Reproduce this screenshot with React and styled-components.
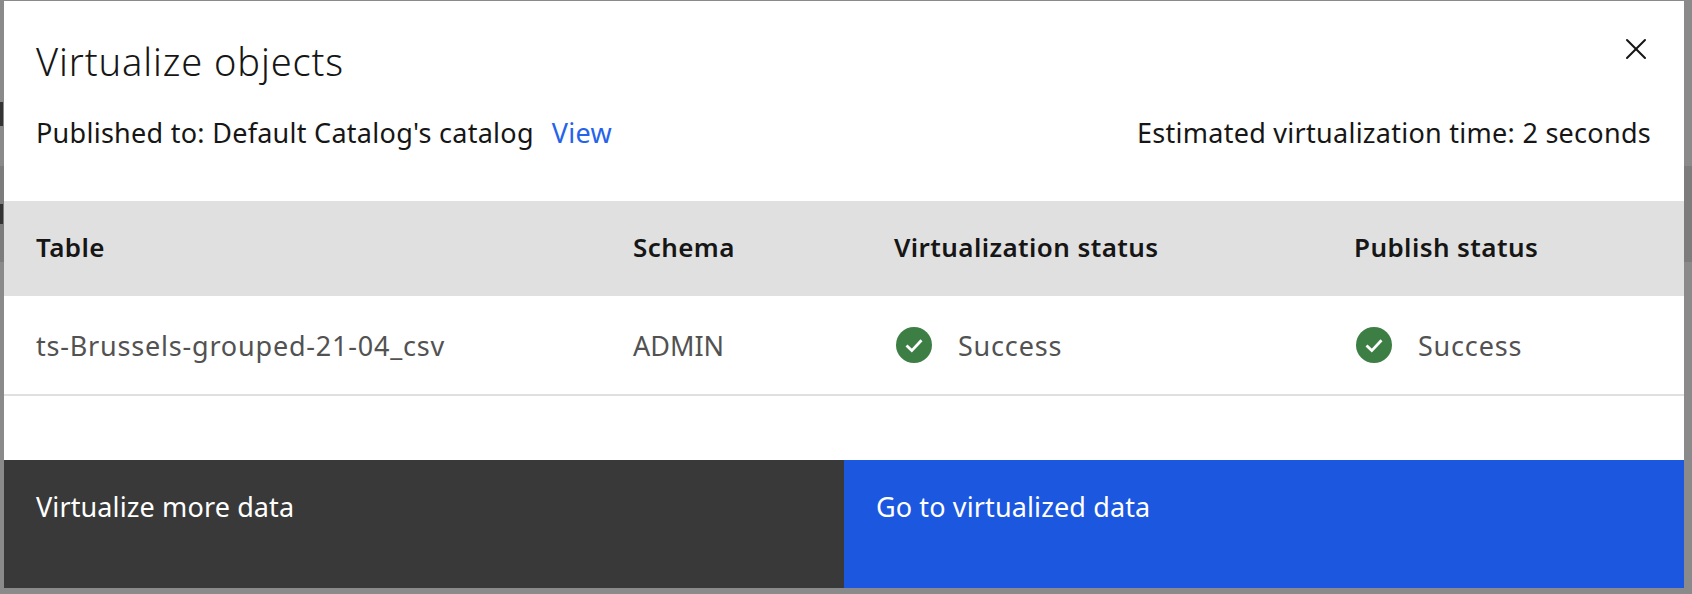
import React from "react";
import styled, { createGlobalStyle } from "styled-components";
import { X } from "lucide-react";

const Global = createGlobalStyle`
  html, body { margin: 0; padding: 0; height: 100%; overflow: hidden; background: #8a8a8a; }
  #root { height: 100%; }
`;

const Page = styled.div`
  position: relative;
  width: 1692px;
  height: 594px;
  box-sizing: border-box;
  padding: 1px 8px 6px 4px;
  background: #8a8a8a;
  font-family: "Noto Sans", "Open Sans", sans-serif;
  overflow: hidden;
`;

const BackdropBand = styled.div`
  position: absolute;
  left: 0;
  right: 0;
  top: 166px;
  height: 96px;
  background: #7c7c7c;
`;

const BackdropMark = styled.i`
  position: absolute;
  left: 0;
  top: ${(p) => p.$top}px;
  width: ${(p) => p.$w}px;
  height: ${(p) => p.$h}px;
  background: #333;
`;

const Modal = styled.div`
  position: relative;
  display: flex;
  flex-direction: column;
  height: 587px;
  background: #fff;
  color: #161616;
`;

const Header = styled.header`
  position: relative;
  height: 200px;
  box-sizing: border-box;
  padding: 37px 33px 0 32px;
`;

const Title = styled.h2`
  margin: 0;
  font-size: 38px;
  line-height: 46px;
  font-weight: 300;
  letter-spacing: 0.9px;
`;

const MetaRow = styled.div`
  display: flex;
  justify-content: space-between;
  margin-top: 33px;
  font-size: 27px;
  line-height: 32px;
  letter-spacing: 0.27px;
`;

const Published = styled.div`
  display: flex;
  gap: 18px;
`;

const ViewLink = styled.a`
  color: #2563eb;
`;

const CloseButton = styled.button`
  position: absolute;
  top: 30px;
  right: 30px;
  width: 36px;
  height: 36px;
  padding: 0;
  display: flex;
  align-items: center;
  justify-content: center;
  border: 0;
  background: none;
  color: #161616;
`;

const Row = styled.div`
  display: grid;
  grid-template-columns: 597px 261px 460px 1fr;
  padding-left: 32px;
  align-items: center;
`;

const HeadRow = styled(Row)`
  height: 95px;
  padding-bottom: 3px;
  box-sizing: border-box;
  background: #e0e0e0;
  font-size: 26px;
  font-weight: 600;
  letter-spacing: 0.42px;
`;

const BodyRow = styled(Row)`
  height: 98px;
  border-bottom: 2px solid #e0e0e0;
  color: #525252;
  font-size: 27px;
  letter-spacing: 0.8px;
`;

const Code = styled.span`
  letter-spacing: 0;
`;

const Status = styled.div`
  display: flex;
  align-items: center;
  gap: 26px;
  padding-left: 2px;
`;

const Spacer = styled.div`
  flex: 1;
`;

const Footer = styled.footer`
  display: flex;
  height: 128px;
`;

const FooterButton = styled.button`
  flex: 1;
  border: 0;
  padding: 29px 32px 0 32px;
  display: flex;
  align-items: flex-start;
  background: ${(p) => (p.$primary ? "#1c57e0" : "#393939")};
  color: #fff;
  font: inherit;
  font-size: 27px;
  line-height: 36px;
  letter-spacing: 0.12px;
`;

const CheckIcon = () => (
  <svg width="36" height="36" viewBox="0 0 36 36" aria-hidden="true">
    <circle cx="18" cy="18" r="18" fill="#3c7e44" />
    <path d="M10.5 18.5 L15.8 23.6 L25.5 13.2" fill="none" stroke="#fff" strokeWidth="2.8" />
  </svg>
);

export default function App() {
  return (
    <Page>
      <Global />
      <BackdropBand />
      <BackdropMark $top={102} $w={3} $h={24} />
      <BackdropMark $top={204} $w={3} $h={20} />
      <Modal>
        <Header>
          <Title>Virtualize objects</Title>
          <MetaRow>
            <Published>
              <span>Published to: Default Catalog's catalog</span>
              <ViewLink>View</ViewLink>
            </Published>
            <span>Estimated virtualization time: 2 seconds</span>
          </MetaRow>
          <CloseButton aria-label="Close">
            <X size={36} strokeWidth={1.35} />
          </CloseButton>
        </Header>
        <HeadRow>
          <span>Table</span>
          <span>Schema</span>
          <span>Virtualization status</span>
          <span>Publish status</span>
        </HeadRow>
        <BodyRow>
          <span>ts-Brussels-grouped-21-04_csv</span>
          <Code>ADMIN</Code>
          <Status><CheckIcon /><span>Success</span></Status>
          <Status><CheckIcon /><span>Success</span></Status>
        </BodyRow>
        <Spacer />
        <Footer>
          <FooterButton>Virtualize more data</FooterButton>
          <FooterButton $primary>Go to virtualized data</FooterButton>
        </Footer>
      </Modal>
    </Page>
  );
}
